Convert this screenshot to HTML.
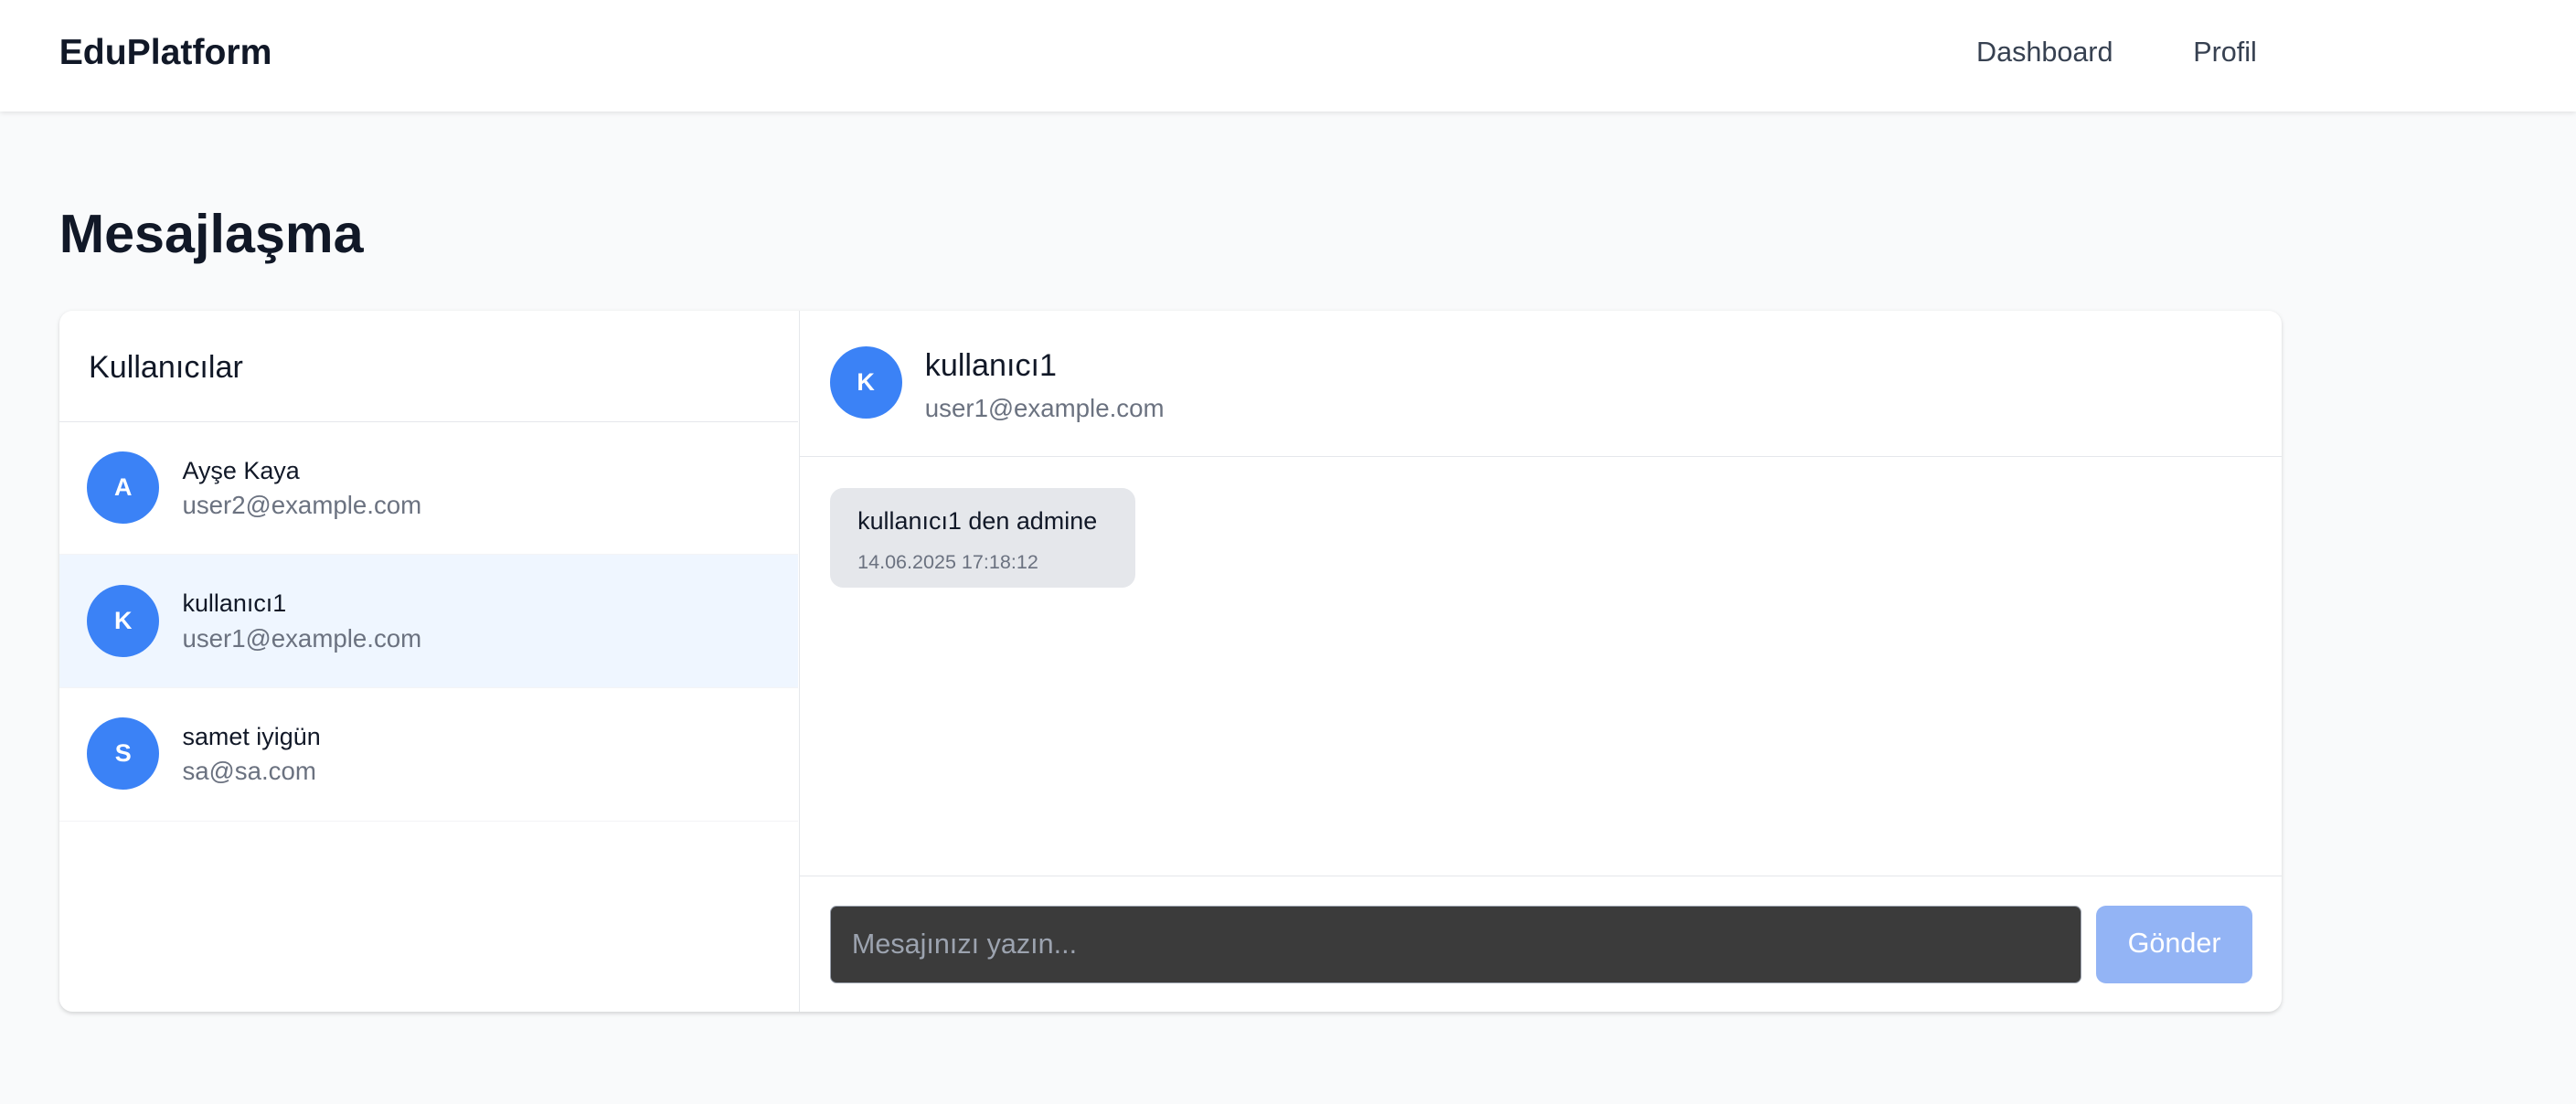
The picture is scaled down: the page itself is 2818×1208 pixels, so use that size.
<!DOCTYPE html>
<html><head><meta charset="utf-8"><style>
*{box-sizing:border-box;margin:0;padding:0}
html,body{width:2818px;height:1208px;overflow:hidden}
body{background:#f9fafb;font-family:"Liberation Sans",sans-serif;}
#w{zoom:1.7972;width:1568px;height:672px;position:relative}
.a{position:absolute}
.hdr{left:0;top:0;width:1568px;height:68px;background:#fff;box-shadow:0 1px 3px rgba(0,0,0,.1)}
.logo{left:36px;top:20px;font-size:21.8px;font-weight:bold;color:#111827}
.nav{top:22px;font-size:17px;color:#374151}
h1{position:absolute;left:36px;top:123px;font-size:33px;font-weight:bold;color:#111827}
.card{left:36px;top:189px;width:1353px;height:427px;background:#fff;border-radius:8px;box-shadow:0 1px 3px rgba(0,0,0,.1),0 1px 2px rgba(0,0,0,.06);overflow:hidden}
.lp{left:0;top:0;width:451px;height:427px;border-right:1px solid #e5e7eb}
.lh{left:0;top:0;width:450px;height:68px;border-bottom:1px solid #e5e7eb;font-size:19px;color:#111827;padding:24px 0 0 18px}
.row{left:0;width:450px;height:81px;border-bottom:1px solid #f3f4f6}
.av{width:44px;height:44px;border-radius:50%;background:#3b82f6;color:#fff;font-weight:bold;font-size:15px;display:flex;align-items:center;justify-content:center}
.nm{font-size:15px;color:#111827}
.em{font-size:15.4px;color:#6b7280}
</style></head><body><div id="w">
<div class="a hdr"></div>
<div class="a logo">EduPlatform</div>
<div class="a nav" style="left:1203px">Dashboard</div>
<div class="a nav" style="left:1335px">Profil</div>
<h1>Mesajlaşma</h1>
<div class="a card">
 <div class="a lp">
  <div class="a lh">Kullanıcılar</div>
  <div class="a row" style="top:68px"><div class="a av" style="left:17px;top:18px">A</div><div class="a nm" style="left:75px;top:21px">Ayşe Kaya</div><div class="a em" style="left:75px;top:42px">user2@example.com</div></div>
  <div class="a row" style="top:149px;background:#eff6ff"><div class="a av" style="left:17px;top:18px">K</div><div class="a nm" style="left:75px;top:21px">kullanıcı1</div><div class="a em" style="left:75px;top:42px">user1@example.com</div></div>
  <div class="a row" style="top:230px"><div class="a av" style="left:17px;top:18px">S</div><div class="a nm" style="left:75px;top:21px">samet iyigün</div><div class="a em" style="left:75px;top:42px">sa@sa.com</div></div>
 </div>
 <div class="a" style="left:451px;top:0;width:902px;height:89px;border-bottom:1px solid #e5e7eb">
  <div class="a av" style="left:18px;top:22px">K</div>
  <div class="a" style="left:76px;top:23px;font-size:19px;color:#111827">kullanıcı1</div>
  <div class="a em" style="left:76px;top:51px">user1@example.com</div>
 </div>
 <div class="a" style="left:469px;top:108px;width:186px;height:61px;background:#e5e7eb;border-radius:8px">
  <div class="a" style="left:17px;top:12px;font-size:15px;color:#111827;white-space:nowrap">kullanıcı1 den admine</div>
  <div class="a" style="left:17px;top:38px;font-size:12px;color:#6b7280;white-space:nowrap">14.06.2025 17:18:12</div>
 </div>
 <div class="a" style="left:451px;top:344px;width:902px;height:83px;border-top:1px solid #e5e7eb">
  <div class="a" style="left:18px;top:18px;width:762px;height:47px;background:#3b3b3b;border:1px solid #9ca3af;border-radius:4px;font-size:17px;color:#9ca3af;padding:13px 0 0 13px">Mesajınızı yazın...</div>
  <div class="a" style="left:789px;top:18px;width:95px;height:47px;background:#93b4f5;border-radius:6px;font-size:17px;color:#fff;text-align:center;padding-top:13px">Gönder</div>
 </div>
</div>
</div></body></html>
